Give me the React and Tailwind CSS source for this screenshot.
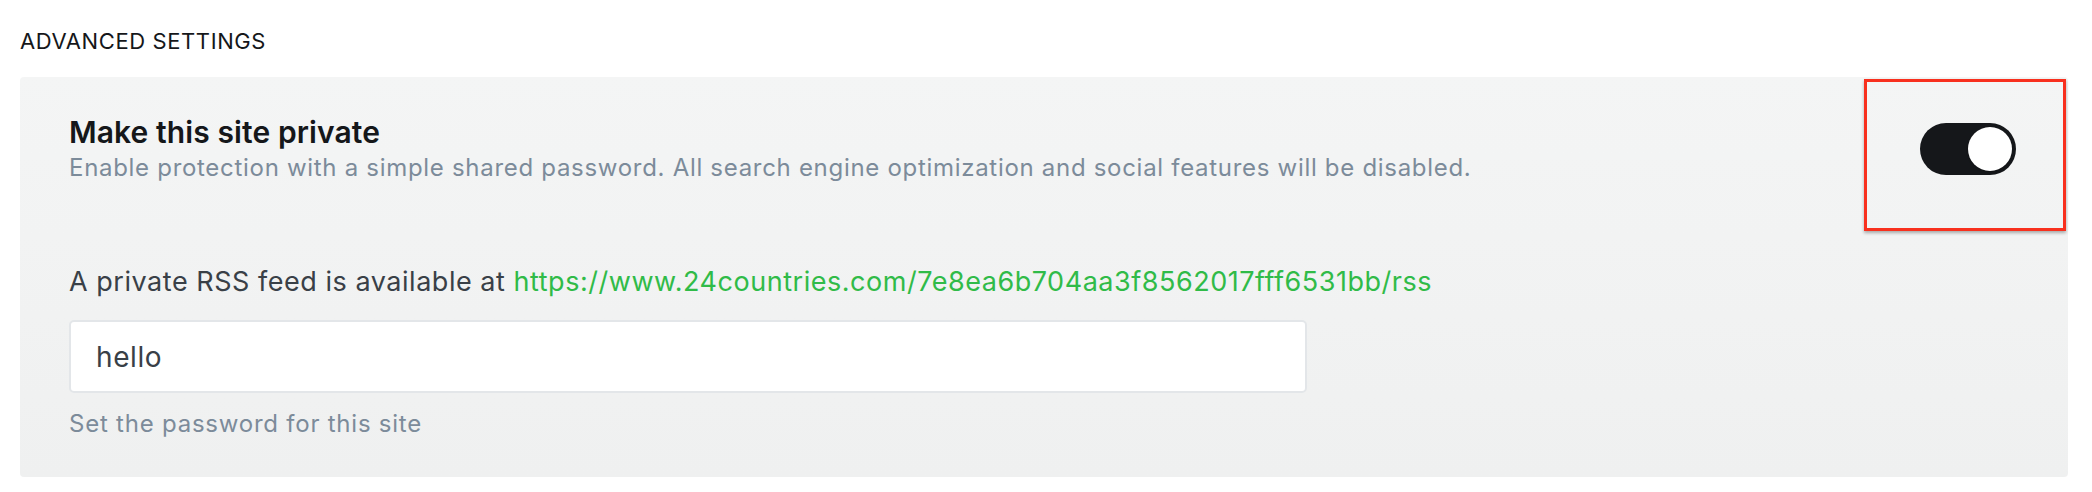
import React from 'react';

const Toggle = ({ on }) => (
  <div
    className={`flex h-[52px] w-[96px] shrink-0 items-center rounded-full p-[4px] ${on ? 'justify-end bg-[#15171a]' : 'justify-start bg-[#e3e6e9]'}`}
  >
    <div className="h-[44px] w-[44px] rounded-full bg-white shadow-[0_1px_2px_rgba(0,0,0,0.25)]" />
  </div>
);

const App = () => {
  return (
    <div className="relative min-h-screen bg-white px-[20px] pt-[26px] font-['Inter',sans-serif] antialiased">
      {/* Section heading */}
      <h2 className="mb-[21px] text-[22px] leading-[30px] font-normal tracking-[0.6px] text-[#15171a]">ADVANCED SETTINGS</h2>

      {/* Private site panel */}
      <div className="w-[2048px] rounded-[4px] bg-gradient-to-b from-[#f4f5f5] to-[#eff0f0] pt-[37px] pr-[52px] pb-[37px] pl-[49px]">
        <div className="flex items-center justify-between">
          <div>
            <h3 className="text-[30px] leading-[36px] font-semibold tracking-[0.1px] text-[#15171a]">Make this site private</h3>
            <p className="mt-[2px] text-[24px] leading-[32px] tracking-[0.7px] text-[#7c8b9a]">
              Enable protection with a simple shared password. All search engine optimization and social features will be disabled.
            </p>
          </div>
          <Toggle on />
        </div>

        <p className="mt-[81px] text-[27px] leading-[34px] tracking-[0.53px] text-[#394047]">
          A private RSS feed is available at{' '}
          <a href="#" className="text-[#30bb48]">https://www.24countries.com/7e8ea6b704aa3f8562017fff6531bb/rss</a>
        </p>

        <input
          type="text"
          defaultValue="hello"
          className="mt-[21px] block h-[73px] w-[1238px] rounded-[5px] border-2 border-[#e3e6e9] bg-white px-[25px] text-[28px] tracking-[0.6px] text-[#394047] outline-none"
        />

        <p className="mt-[15px] text-[24px] leading-[32px] tracking-[0.77px] text-[#7c8b9a]">Set the password for this site</p>
      </div>

      {/* Highlight annotation */}
      <div className="pointer-events-none absolute top-[79px] left-[1864px] h-[152px] w-[202px] border-[3px] border-[#f8301e] shadow-[0_2px_3px_rgba(0,0,0,0.3)]" />
    </div>
  );
};

export default App;
